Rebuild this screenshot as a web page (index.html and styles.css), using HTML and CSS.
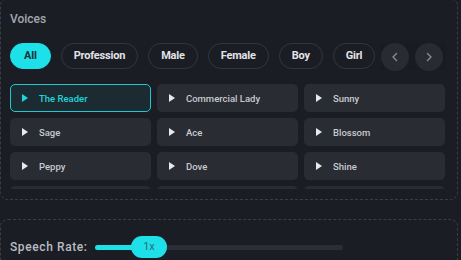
FILE: index.html
```html
<!DOCTYPE html>
<html lang="en">
<head>
    <meta charset="UTF-8">
    <meta name="viewport" content="width=device-width, initial-scale=1.0">
    <title>Voices</title>
    <link rel="stylesheet" href="styles.css">
</head>
<body>
    <div class="voices-panel">
        <div class="panel-title">Voices</div>

        <div class="filter-row">
            <div class="chips">
                <span class="chip active">All</span>
                <span class="chip">Profession</span>
                <span class="chip">Male</span>
                <span class="chip">Female</span>
                <span class="chip">Boy</span>
                <span class="chip">Girl</span>
            </div>
            <div class="chip-nav">
                <span class="nav-btn">
                    <svg width="10" height="10" viewBox="0 0 10 10"><path d="M6.5 1.5 3 5l3.5 3.5" fill="none" stroke="#8a8d95" stroke-width="1.4" stroke-linecap="round" stroke-linejoin="round"/></svg>
                </span>
                <span class="nav-btn">
                    <svg width="10" height="10" viewBox="0 0 10 10"><path d="M3.5 1.5 7 5 3.5 8.5" fill="none" stroke="#8a8d95" stroke-width="1.4" stroke-linecap="round" stroke-linejoin="round"/></svg>
                </span>
            </div>
        </div>

        <div class="voice-list">
            <div class="voice selected"><span class="play"></span>The Reader</div>
            <div class="voice"><span class="play"></span>Commercial Lady</div>
            <div class="voice"><span class="play"></span>Sunny</div>
            <div class="voice"><span class="play"></span>Sage</div>
            <div class="voice"><span class="play"></span>Ace</div>
            <div class="voice"><span class="play"></span>Blossom</div>
            <div class="voice"><span class="play"></span>Peppy</div>
            <div class="voice"><span class="play"></span>Dove</div>
            <div class="voice"><span class="play"></span>Shine</div>
            <div class="voice"></div>
            <div class="voice"></div>
            <div class="voice"></div>
        </div>
    </div>

    <div class="rate-panel">
        <div class="rate-row">
            <span class="rate-label">Speech Rate:</span>
            <div class="slider">
                <div class="slider-fill"></div>
                <div class="slider-thumb">1x</div>
            </div>
        </div>
    </div>
</body>
</html>
```

FILE: styles.css
```css
* {
    margin: 0;
    padding: 0;
    box-sizing: border-box;
}

body {
    font-family: Roboto, 'Liberation Sans', sans-serif;
    background: #1b1d24;
    height: 260px;
    overflow: hidden;
}

.voices-panel {
    margin: -2px 3px 0 0;
    border: 1px dashed #3a3d46;
    border-radius: 8px;
    padding: 12px 12px 10px 9px;
}

.panel-title {
    font-size: 12px;
    font-weight: 500;
    line-height: 16px;
    color: #a3a6ae;
}

.filter-row {
    margin-top: 16px;
    position: relative;
    height: 26px;
}

.chips {
    display: flex;
    gap: 10px;
    overflow: hidden;
    height: 26px;
}

.chip {
    flex-shrink: 0;
    height: 26px;
    line-height: 24px;
    padding: 0 12px;
    border: 1px solid #33363e;
    border-radius: 13px;
    font-size: 11px;
    font-weight: 700;
    letter-spacing: -0.2px;
    color: #e2e3e7;
}

.chip.active {
    padding: 0 13px;
    background: #1ee0e8;
    border-color: #1ee0e8;
    color: #16323a;
}

.chip-nav {
    position: absolute;
    right: -1px;
    top: 0;
    height: 27px;
    display: flex;
    gap: 6px;
    padding-right: 3px;
    background: #191b21;
}

.nav-btn {
    width: 28px;
    height: 28px;
    border-radius: 50%;
    background: #292b33;
    display: flex;
    align-items: center;
    justify-content: center;
}

.voice-list {
    margin-top: 15px;
    height: 105px;
    overflow: hidden;
    display: grid;
    grid-template-columns: repeat(3, 1fr);
    grid-auto-rows: 28px;
    gap: 6px;
}

.voice {
    display: flex;
    align-items: center;
    gap: 11px;
    padding-left: 11px;
    background: #2a2c33;
    border: 1px solid transparent;
    border-radius: 5px;
    font-size: 9.5px;
    font-weight: 500;
    color: #c8cad0;
}

.voice.selected {
    background: #1c2b31;
    border-color: #22c8d0;
    color: #1fd4dc;
}

.play {
    width: 0;
    height: 0;
    border-left: 6px solid #e8e9ec;
    border-top: 4px solid transparent;
    border-bottom: 4px solid transparent;
}

.voice.selected .play {
    border-left-color: #1fd4dc;
}

.rate-panel {
    margin: 19px 3px 0 0;
    border: 1px dashed #3a3d46;
    border-radius: 8px;
    padding: 16px 12px 20px 9px;
}

.rate-row {
    display: flex;
    align-items: center;
    height: 22px;
}

.rate-label {
    width: 85px;
    font-size: 12px;
    font-weight: 500;
    letter-spacing: 0.6px;
    color: #b9bcc3;
}

.slider {
    position: relative;
    width: 248px;
    height: 5px;
    border-radius: 3px;
    background: #2b2e36;
}

.slider-fill {
    width: 45px;
    height: 5px;
    border-radius: 3px;
    background: #1ee0e8;
}

.slider-thumb {
    position: absolute;
    left: 36px;
    top: -8.5px;
    width: 36px;
    height: 22px;
    border-radius: 11px;
    background: #1ee0e8;
    font-size: 11px;
    line-height: 22px;
    text-align: center;
    color: #2a6e74;
}
```
